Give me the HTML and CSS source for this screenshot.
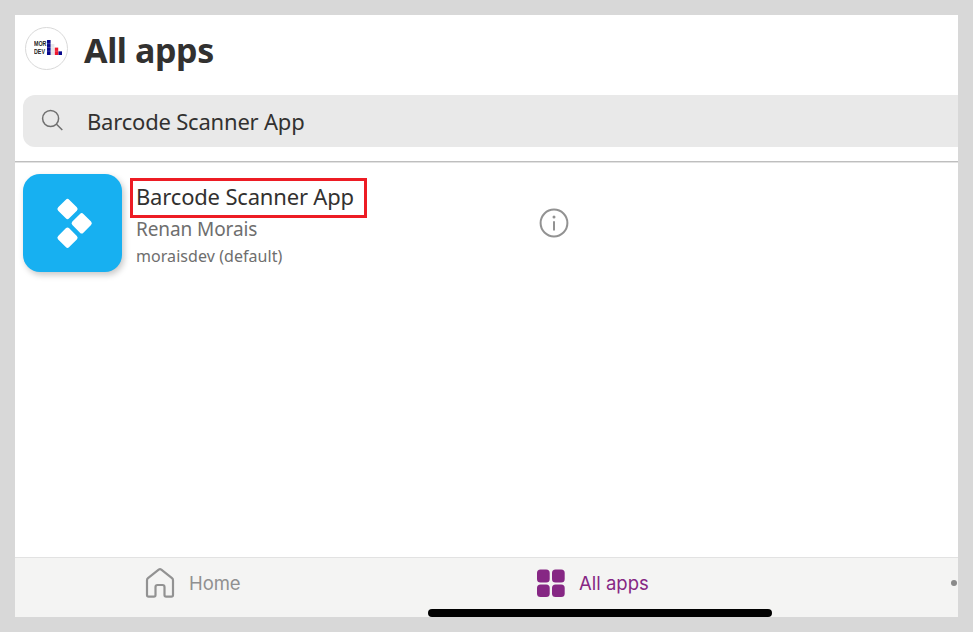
FILE: index.html
```
<!DOCTYPE html>
<html lang="en">
<head>
<meta charset="utf-8">
<title>All apps</title>
<link rel="stylesheet" href="styles.css">
</head>
<body>
<div class="screen">
  <header class="header">
    <div class="avatar">
      <div class="brand"><span>MOR</span><span>DEV</span></div>
      <svg class="bars" width="15" height="15" viewBox="0 0 15 15">
        <path fill="#08088c" d="M0 0h3.6v15H0zM11.4 11.2h3.6V15h-3.6z"/>
        <path fill="#e6e6ea" d="M4 4h3.4v11H4z"/>
        <path fill="#f0182c" d="M7.8 7.5h3.4V15H7.8z"/>
        <path stroke="#fff" stroke-opacity=".45" stroke-width=".5" d="M0 3.700h15M0 7.400h15M0 11.100h15"/>
      </svg>
    </div>
    <h1 class="title">All apps</h1>
  </header>
  <div class="search">
    <svg class="search-icon" width="24" height="24" viewBox="0 0 24 24" fill="none" stroke="#707070" stroke-width="1.5">
      <circle cx="9.6" cy="9.5" r="8"/><path d="M15.300 15l6 6"/>
    </svg>
    <span class="query">Barcode Scanner App</span>
  </div>
  <main class="list">
    <article class="app">
      <div class="tile">
        <svg width="98" height="98" viewBox="0 0 98 98" fill="#fff">
          <rect x="36.7" y="27.2" width="15.6" height="15.6" rx="2.4" transform="rotate(45 44.5 35)"/>
          <rect x="50.9" y="41.5" width="15.6" height="15.6" rx="2.4" transform="rotate(45 58.7 49.3)"/>
          <rect x="36.7" y="55.9" width="15.6" height="15.6" rx="2.4" transform="rotate(45 44.5 63.7)"/>
        </svg>
      </div>
      <div class="details">
        <div class="name">Barcode Scanner App</div>
        <div class="owner">Renan Morais</div>
        <div class="env">moraisdev (default)</div>
      </div>
      <svg class="info" width="30" height="30" viewBox="0 0 30 30" fill="none" stroke="#929292" stroke-width="2">
        <circle cx="15" cy="15" r="13.4"/><path d="M15 13.2v9.200"/><circle cx="15" cy="9" r="1.5" fill="#929292" stroke="none"/>
      </svg>
    </article>
  </main>
  <nav class="tabs">
    <div class="tab home">
      <svg width="30" height="32" viewBox="0 0 30 32" fill="none" stroke="#929292" stroke-width="2.200" stroke-linejoin="round">
        <path d="M2 12.200Q2 11 3 10.200L13.700 1.600Q15 .6 16.300 1.600L27 10.200Q28 11 28 12.200V27Q28 28.700 26.300 28.700H21.200Q19.500 28.700 19.500 27V19Q19.500 17 17.500 17H12.500Q10.500 17 10.500 19V27Q10.500 28.700 8.800 28.700H3.700Q2 28.700 2 27Z"/>
      </svg>
      <span>Home</span>
    </div>
    <div class="tab all">
      <svg width="28" height="28" viewBox="0 0 28 28" fill="#862784">
        <rect y="-.5" width="12.700" height="13" rx="3.500"/><rect x="15" y="-.5" width="12.700" height="13" rx="3.500"/>
        <rect y="14.500" width="12.700" height="12.500" rx="3.500"/><rect x="15" y="14.500" width="12.700" height="12.500" rx="3.500"/>
      </svg>
      <span>All apps</span>
    </div>
    <div class="more"></div>
    <div class="indicator"></div>
  </nav>
</div>
</body>
</html>
```
FILE: styles.css
```
* { box-sizing: border-box; }
svg { overflow: visible; flex: none; }
body {
  margin: 0;
  padding: 15px;
  height: 632px;
  overflow: hidden;
  background: #d8d8d8;
  font-family: "Noto Sans", "Open Sans", sans-serif;
  color: #323130;
}
.screen {
  width: 943px;
  height: 602px;
  background: #fff;
  display: flex;
  flex-direction: column;
}
.header {
  height: 80px;
  flex: none;
  display: flex;
  align-items: flex-start;
  padding: 12px 0 0 10px;
}
.avatar {
  width: 43px;
  height: 43px;
  border: 1.5px solid #d9d9d9;
  border-radius: 50%;
  display: flex;
  align-items: center;
  padding: 0 0 2px 8px;
}
.brand {
  width: 13px;
  flex: none;
  font: 700 7px/8px "Liberation Sans", sans-serif;
  color: #222;
  display: flex;
  flex-direction: column;
}
.brand span { width: 17px; transform: scaleX(.76); transform-origin: left; }
.title {
  margin: 0 0 0 16px;
  font-size: 34px;
  font-weight: 700;
  line-height: 46px;
  letter-spacing: -.4px;
}
.search {
  flex: none;
  height: 52px;
  margin-left: 8px;
  padding-left: 18px;
  background: #e9e9e9;
  border-radius: 12px 0 0 12px;
  display: flex;
  align-items: center;
}
.query {
  margin-left: 22px;
  font-size: 22px;
  line-height: 30px;
  letter-spacing: -.2px;
}
.list {
  flex: 1;
  margin-top: 14px;
  border-top: 1px solid #bebebe;
  box-shadow: inset 0 1px #e2e2e2;
}
.app { display: flex; padding: 12px 0 0 8px; }
.tile {
  width: 99px;
  height: 98px;
  border-radius: 17px;
  background: #17b0f1;
  box-shadow: 2px 3px 6px rgba(0, 0, 0, .22);
}
.details { width: 409px; margin-left: 8px; padding-top: 4px; }
.name {
  width: 237px;
  height: 40px;
  padding-left: 3px;
  border: 3px solid #ed1c24;
  font-size: 22px;
  line-height: 30px;
  letter-spacing: -.18px;
}
.owner { padding-left: 6px; font-size: 19px; line-height: 23px; letter-spacing: -.1px; color: #6e6e6e; }
.env { padding-left: 6px; font-size: 16px; line-height: 30px; letter-spacing: .06px; color: #6e6e6e; }
.info { margin-top: 34px; }
.tabs {
  position: relative;
  height: 60px;
  flex: none;
  display: flex;
  align-items: center;
  padding-bottom: 8px;
  border-top: 1px solid #e2e2e2;
  background: #f4f4f3;
  font-family: Inter, sans-serif;
  font-size: 18.5px;
}
.tab { display: flex; align-items: center; }
.tab span { margin-left: 14px; padding-bottom: 2px; }
.home { width: 391px; padding-left: 130px; color: #909090; }
.home span { letter-spacing: -.1px; }
.all { width: 417px; padding-left: 131px; color: #862784; }
.more { width: 6px; height: 6px; margin: -2px 0 0 128px; border-radius: 50%; background: #8a8a8a; }
.indicator {
  position: absolute;
  left: 413px;
  bottom: 0;
  width: 344px;
  height: 8px;
  border-radius: 4px;
  background: #000;
}
```
